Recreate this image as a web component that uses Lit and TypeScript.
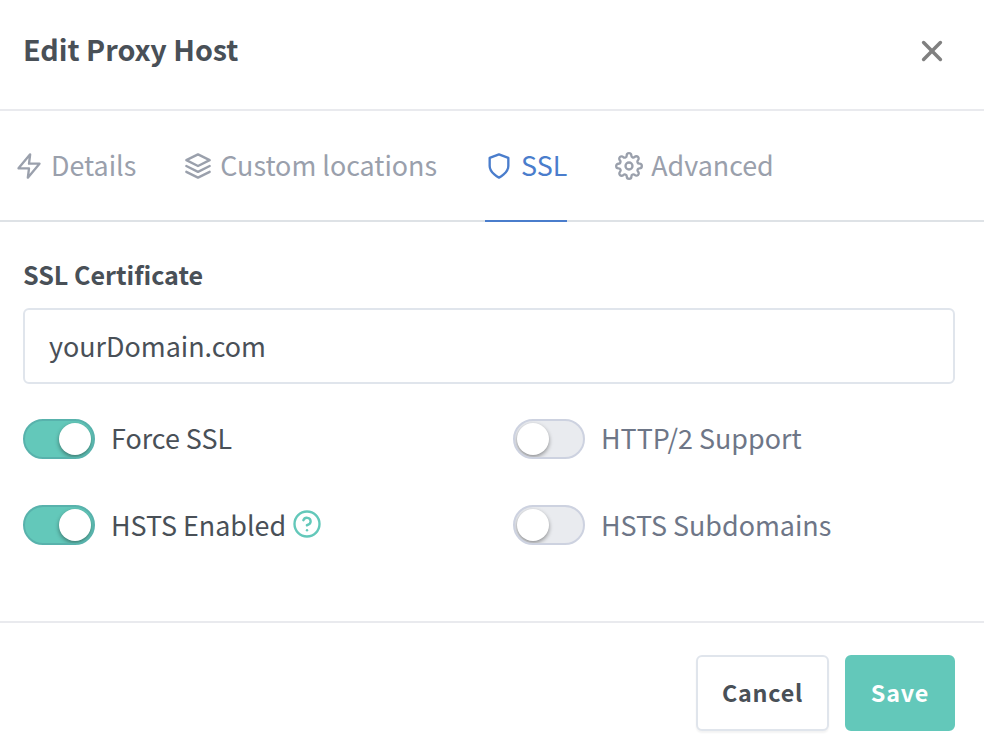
import { LitElement, html, css, svg } from "lit";
import { customElement, property, state } from "lit/decorators.js";
import { classMap } from "lit/directives/class-map.js";

const icons: Record<string, unknown> = {
  zap: svg`<polygon points="13 2 3 14 12 14 11 22 21 10 12 10 13 2"></polygon>`,
  layers: svg`<polygon points="12 2 2 7 12 12 22 7 12 2"></polygon><polyline points="2 17 12 22 22 17"></polyline><polyline points="2 12 12 17 22 12"></polyline>`,
  shield: svg`<path d="M12 22s8-4 8-10V5l-8-3-8 3v7c0 6 8 10 8 10z"></path>`,
  settings: svg`<circle cx="12" cy="12" r="3"></circle><path d="M19.4 15a1.65 1.65 0 0 0 .33 1.82l.06.06a2 2 0 0 1 0 2.83 2 2 0 0 1-2.83 0l-.06-.06a1.65 1.65 0 0 0-1.82-.33 1.65 1.65 0 0 0-1 1.51V21a2 2 0 0 1-2 2 2 2 0 0 1-2-2v-.09A1.65 1.65 0 0 0 9 19.4a1.65 1.65 0 0 0-1.82.33l-.06.06a2 2 0 0 1-2.83 0 2 2 0 0 1 0-2.83l.06-.06a1.65 1.65 0 0 0 .33-1.82 1.65 1.65 0 0 0-1.51-1H3a2 2 0 0 1-2-2 2 2 0 0 1 2-2h.09A1.65 1.65 0 0 0 4.6 9a1.65 1.65 0 0 0-.33-1.82l-.06-.06a2 2 0 0 1 0-2.83 2 2 0 0 1 2.83 0l.06.06a1.65 1.65 0 0 0 1.82.33H9a1.65 1.65 0 0 0 1-1.51V3a2 2 0 0 1 2-2 2 2 0 0 1 2 2v.09a1.65 1.65 0 0 0 1 1.51 1.65 1.65 0 0 0 1.82-.33l.06-.06a2 2 0 0 1 2.83 0 2 2 0 0 1 0 2.83l-.06.06a1.65 1.65 0 0 0-.33 1.82V9a1.65 1.65 0 0 0 1.51 1H21a2 2 0 0 1 2 2 2 2 0 0 1-2 2h-.09a1.65 1.65 0 0 0-1.51 1z"></path>`,
  help: svg`<circle cx="12" cy="12" r="10"></circle><path d="M9.09 9a3 3 0 0 1 5.83 1c0 2-3 3-3 3"></path><line x1="12" y1="17" x2="12" y2="17"></line>`,
  close: svg`<line x1="4.8" y1="4.8" x2="19.2" y2="19.2"></line><line x1="19.2" y1="4.8" x2="4.8" y2="19.2"></line>`,
};

@customElement("line-icon")
class LineIcon extends LitElement {
  @property() name = "";
  static styles = css`
    :host { display: block; flex: none; width: 28px; height: 28px; }
    svg {
      display: block; width: 100%; height: 100%; fill: none; stroke: currentColor; overflow: visible;
      stroke-width: var(--icon-stroke, 2); stroke-linecap: round; stroke-linejoin: round;
    }
  `;
  render() {
    return html`<svg viewBox="0 0 24 24">${icons[this.name]}</svg>`;
  }
}

@customElement("toggle-switch")
class ToggleSwitch extends LitElement {
  @property() label = "";
  @property({ type: Boolean }) on = false;
  @property({ type: Boolean }) help = false;
  static styles = css`
    :host { display: flex; height: 40px; }
    .track {
      box-sizing: border-box; flex: none; display: flex; width: 72px; height: 40px; padding: 2px;
      border: 2px solid #cdd2e0; border-radius: 20px; background: #e9ebef; overflow: hidden;
    }
    .track.on { justify-content: flex-end; background: #63c8ba; border-color: #58b2ac; }
    .knob {
      width: 32px; height: 32px; border-radius: 50%; background: #fff;
      box-shadow: 0 2px 4px rgba(0, 0, 0, 0.4);
    }
    .label {
      margin-left: 16px; padding-top: var(--label-drop, 0px); font-size: 26.9px; line-height: 38px;
      color: #6e7687; white-space: nowrap;
    }
    .label.on { color: #495057; }
    .help { width: 30px; height: 30px; margin: 3.5px 0 0 6px; color: #63c8ba; --icon-stroke: 1.9; }
  `;
  render() {
    return html`
      <div class=${classMap({ track: true, on: this.on })}><div class="knob"></div></div>
      <span class=${classMap({ label: true, on: this.on })}>${this.label}</span>
      ${this.help ? html`<line-icon class="help" name="help"></line-icon>` : ""}
    `;
  }
}

@customElement("app-root")
class AppRoot extends LitElement {
  @state() active = "SSL";

  tabs = [
    { icon: "zap", label: "Details" },
    { icon: "layers", label: "Custom locations" },
    { icon: "shield", label: "SSL" },
    { icon: "settings", label: "Advanced" },
  ];

  static styles = css`
    :host {
      display: flex; flex-direction: column; box-sizing: border-box; height: 754px;
      background: #fff; color: #495057; overflow: hidden;
      font-family: "Noto Sans CJK JP", "Noto Sans", sans-serif;
    }
    header {
      box-sizing: border-box; height: 111px; padding: 29px 38px 0 23px; display: flex;
      justify-content: space-between; border-bottom: 2px solid #e9eaee;
    }
    h1 { margin: 0; font-size: 28.7px; line-height: 40px; font-weight: 700; }
    .close { width: 28px; height: 28px; margin-top: 8px; color: #808080; --icon-stroke: 3; }
    nav {
      box-sizing: border-box; height: 111px; padding-left: 15px; display: flex; gap: 48px;
      border-bottom: 2px solid #dee2e6;
    }
    .tab {
      box-sizing: border-box; display: flex; height: 111px; padding-top: 41px;
      color: #9aa0ac; border-bottom: 2px solid transparent;
    }
    .tab.active { color: #4a7dcc; border-color: #4a7dcc; }
    .tab span { margin: -5px 0 0 8px; font-size: 26.86px; line-height: 36px; white-space: nowrap; }
    main { flex: none; box-sizing: border-box; height: 399px; padding: 34px 29px 0 23px; }
    .caption { font-size: 25.1px; line-height: 36px; font-weight: 700; }
    .field {
      box-sizing: border-box; height: 76px; margin-top: 16px; padding: 17px 24px;
      border: 2px solid #e0e5ec; border-radius: 6px; font-size: 26.9px; line-height: 37px;
    }
    .switches { display: grid; grid-template-columns: 490px 1fr; row-gap: 46px; margin-top: 35px; }
    .low { --label-drop: 1px; }
    footer {
      box-sizing: border-box; flex: 1; display: flex; justify-content: flex-end; gap: 16px;
      padding: 32px 29px 0; border-top: 2px solid #e9eaee;
    }
    button {
      box-sizing: border-box; height: 76px; padding: 0 0 2px; border: 2px solid #e0e5ec; border-radius: 6px;
      background: #fff; color: #495057; font: 700 23.3px/36px "Noto Sans CJK JP", sans-serif;
      letter-spacing: 0.8px;
    }
    .cancel { width: 133px; box-shadow: 0 2px 2px rgba(0, 0, 0, 0.05); }
    .save { width: 110px; background: #63c8ba; border-color: #63c8ba; color: #fff; }
  `;

  render() {
    return html`
      <header>
        <h1>Edit Proxy Host</h1>
        <line-icon class="close" name="close"></line-icon>
      </header>
      <nav>
        ${this.tabs.map(
          (t) => html`<div
            class=${classMap({ tab: true, active: t.label === this.active })}
            @click=${() => (this.active = t.label)}
          ><line-icon name=${t.icon}></line-icon><span>${t.label}</span></div>`
        )}
      </nav>
      <main>
        <div class="caption">SSL Certificate</div>
        <div class="field">yourDomain.com</div>
        <div class="switches">
          <toggle-switch label="Force SSL" on></toggle-switch>
          <toggle-switch label="HTTP/2 Support"></toggle-switch>
          <toggle-switch class="low" label="HSTS Enabled" on help></toggle-switch>
          <toggle-switch class="low" label="HSTS Subdomains"></toggle-switch>
        </div>
      </main>
      <footer>
        <button class="cancel">Cancel</button>
        <button class="save">Save</button>
      </footer>
    `;
  }
}
